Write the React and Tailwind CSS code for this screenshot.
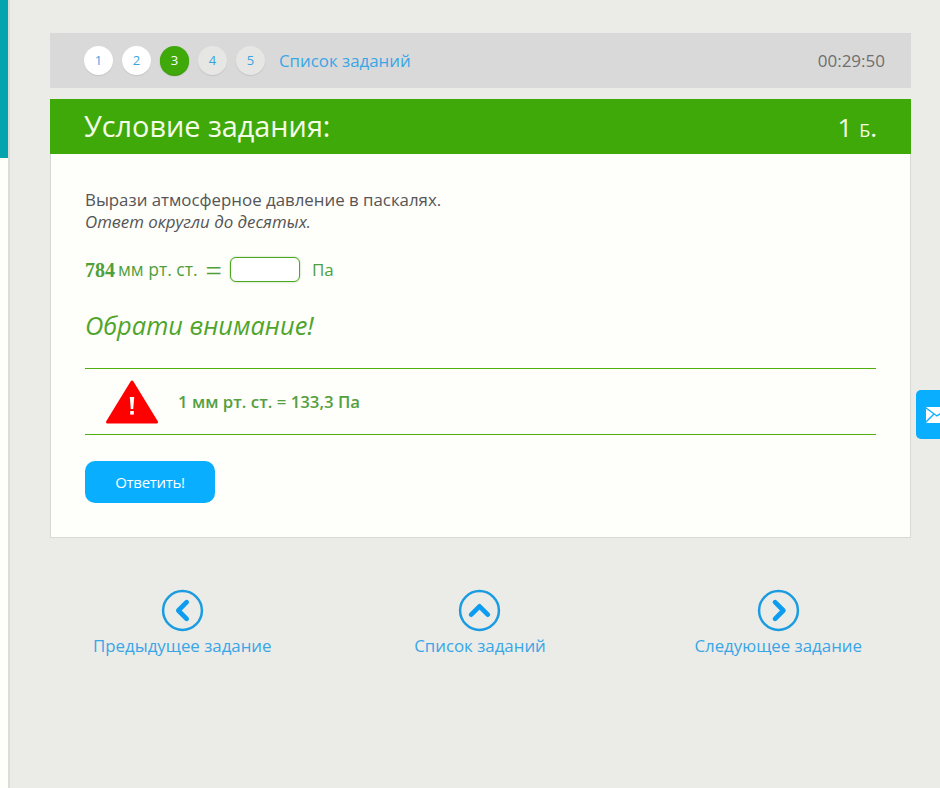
import React from "react";

function Step({ n, state }) {
  const cls =
    state === "active"
      ? "bg-[#3fa90a] text-white shadow-[0_1px_1px_#2f8a05]"
      : state === "done"
      ? "bg-white text-[#3aa4e0] shadow-[0_1px_1px_#c4c4c4]"
      : "bg-[#e6e6e4] text-[#3aa4e0] shadow-[0_1px_1px_#c4c4c4]";
  return (
    <div className={`w-[29px] h-[29px] rounded-full flex items-center justify-center text-[13px] ${cls}`}>{n}</div>
  );
}

function NavItem({ label, dir, className = "" }) {
  const d = dir === "left" ? "M18.5 9.5 L12.5 15.5 L18.5 21.5" : dir === "right" ? "M13 9.5 L19 15.5 L13 21.5" : "M9.5 18.5 L15.5 12.5 L21.5 18.5";
  return (
    <div className={`flex flex-col items-center ${className}`}>
      <svg width="43" height="43" viewBox="0 0 31 31" className="block">
        <circle cx="15.5" cy="15.5" r="14" fill="none" stroke="#1c9ce0" strokeWidth="1.8" />
        <path d={d} fill="none" stroke="#0d9df0" strokeWidth="3.4" strokeLinecap="round" strokeLinejoin="round" />
      </svg>
      <div className="text-[16.85px] leading-[22px] text-[#39a6e6] mt-[3px]">{label}</div>
    </div>
  );
}

export default function App() {
  return (
    <div
      className="w-[940px] h-[788px] overflow-hidden flex bg-[#ebebe8] text-[#555]"
      style={{ fontFamily: '"Open Sans", sans-serif' }}
    >
      <aside className="w-[10px] shrink-0 flex flex-col border-r-2 border-[#dcdcda] bg-[#fefefb]">
        <div className="h-[158px] bg-[#03a4ad]" />
      </aside>
      <main className="flex-1 min-w-0 relative pl-[40px] pr-[29px] pt-[33px]">
        <div className="h-[55px] bg-[#d9d9d9] flex items-center pl-[34px] pr-[26px]">
          <div className="flex items-center gap-[9px]">
            <Step n="1" state="done" />
            <Step n="2" state="done" />
            <Step n="3" state="active" />
            <Step n="4" />
            <Step n="5" />
          </div>
          <span className="ml-[14px] text-[16.85px] text-[#39a6e6]">Список заданий</span>
          <span className="ml-auto text-[17px] text-[#6f6f6f]">00:29:50</span>
        </div>
        <div className="mt-[11px] bg-[#fefefb] border-x border-b border-[#d8d8d6]">
          <div className="h-[55px] bg-[#3fa90a] flex items-center justify-between pl-[34px] pr-[34px] text-[#f4fde8] -mx-px">
            <span className="text-[28.8px] leading-none">Условие задания:</span>
            <span className="text-[26px] leading-none [font-variant-caps:small-caps]">1 б.</span>
          </div>
          <div className="px-[34px] pt-[35px] pb-[34px]">
            <p className="text-[16.85px] leading-[22px]">Вырази атмосферное давление в паскалях.</p>
            <p className="text-[16.85px] leading-[22px] italic">Ответ округли до десятых.</p>
            <div className="mt-[23px] flex items-center text-[#4f9f3a] h-[27px]">
              <span className="font-bold text-[20px]" style={{ fontFamily: '"Liberation Serif", serif' }}>784</span>
              <span className="ml-[3px] text-[17.5px]">мм рт. ст.</span>
              <span className="ml-[8px] mt-[3px] text-[29px] leading-none" style={{ fontFamily: '"Liberation Serif", serif' }}>=</span>
              <span className="ml-[8px] w-[70px] h-[25px] border-[1.5px] border-[#49a81f] rounded-[6px] bg-white shadow-[0_0_2px_#9fd08a]" />
              <span className="ml-[12px] text-[17px]">Па</span>
            </div>
            <div className="mt-[24px] text-[25.4px] leading-[36px] italic text-[#4fa52a]">Обрати внимание!</div>
            <div className="mt-[25px] h-[67px] border-y border-[#4fae0c] flex items-center pl-[21px]">
              <svg width="52" height="46" viewBox="0 0 52 46" className="block shrink-0">
                <path d="M26 3 L50.5 43 L1.5 43 Z" fill="#fe0000" stroke="#fe0000" strokeWidth="3" strokeLinejoin="round" />
                <path d="M23.8 18 H28.2 L27.2 30 H24.8 Z" fill="#fff" />
                <rect x="24.2" y="32" width="3.6" height="3.6" fill="#fff" />
              </svg>
              <span className="ml-[20px] text-[16.8px] font-semibold text-[#55a03e]">1 мм рт. ст. = 133,3 Па</span>
            </div>
            <button className="mt-[26px] block w-[130px] h-[42px] rounded-[10px] bg-[#0aaeff] text-white text-[15px] tracking-[-0.3px]">
              Ответить!
            </button>
          </div>
        </div>
        <div className="mt-[51px] pl-[43px] pr-[49px] flex justify-between items-start">
          <NavItem dir="left" label="Предыдущее задание" />
          <NavItem dir="up" label="Список заданий" className="mr-[6px]" />
          <NavItem dir="right" label="Следующее задание" />
        </div>
        <div className="absolute right-0 top-[390px] w-[24px] h-[49px] bg-[#0aaeff] rounded-l-[5px] overflow-hidden flex items-center pl-[10px]">
          <svg width="22" height="16" viewBox="0 0 22 16" className="shrink-0">
            <rect width="22" height="16" rx="1" fill="#fff" />
            <path d="M0 1 L11 9 L22 1 M0 15 L8 7 M22 15 L14 7" fill="none" stroke="#0aaeff" strokeWidth="1.4" />
          </svg>
        </div>
      </main>
    </div>
  );
}
